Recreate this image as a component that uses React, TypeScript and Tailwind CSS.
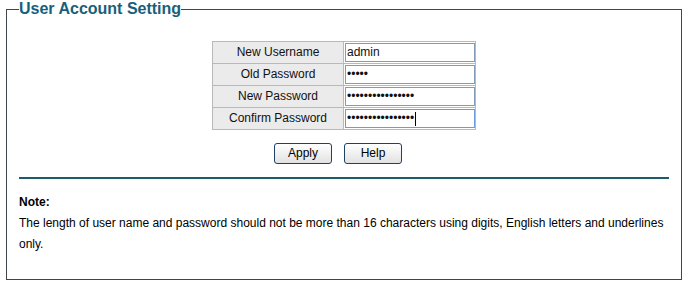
import React from "react";

const rows = [
  { label: "New Username", value: "admin", pw: false, focus: false },
  { label: "Old Password", value: "•••••", pw: true, focus: false },
  { label: "New Password", value: "••••••••••••••••", pw: true, focus: false },
  { label: "Confirm Password", value: "••••••••••••••••", pw: true, focus: true },
];

export default function App() {
  return (
    <div className="w-[693px] h-[289px] bg-white" style={{ fontFamily: '"Liberation Sans", Arial, sans-serif' }}>
      <fieldset className="ml-[6px] w-[676px] border border-[#3f4548] px-[12px] pb-[24px]">
        <legend className="p-0 text-[16px] font-bold leading-[18px] text-[#18607a]">User Account Setting</legend>
        <div className="mt-[23px] flex justify-center">
          <table className="border-collapse border border-[#b9b9b9] text-[12px] text-[#111]">
            <tbody>
              {rows.map((r) => (
                <tr key={r.label} className="h-[22px]">
                  <td className="w-[131px] border border-[#b9b9b9] bg-[#ebebeb] p-0 text-center leading-[21px]">{r.label}</td>
                  <td className="w-[131px] border border-[#b9b9b9] bg-white p-0 pl-[1px] align-top">
                    <div
                      className={
                        "mt-[1px] flex h-[19px] w-[130px] items-center border bg-white pl-[1px] leading-[17px] " +
                        (r.focus ? "border-[#6a9de0]" : "border-[#7f9db9]")
                      }
                    >
                      <span>{r.value}</span>
                      {r.focus && <span className="ml-[1px] inline-block h-[14px] w-[1px] bg-black" />}
                    </div>
                  </td>
                </tr>
              ))}
            </tbody>
          </table>
        </div>
        <div className="mt-[13px] flex justify-center gap-[12px] pr-[12px]">
          <button className="h-[21px] w-[58px] rounded-[3px] border border-[#1f4168] bg-gradient-to-b from-white to-[#e2e2e2] text-[12px] leading-[19px] text-black">
            Apply
          </button>
          <button className="h-[21px] w-[58px] rounded-[3px] border border-[#1f4168] bg-gradient-to-b from-white to-[#e2e2e2] text-[12px] leading-[19px] text-black">
            Help
          </button>
        </div>
        <div className="mt-[13px] h-[2px] w-full bg-[#1b5c68]" />
        <div className="mt-[13px] text-[12px] leading-[21px] text-black">
          <div className="font-bold">Note:</div>
          <div>
            The length of user name and password should not be more than 16 characters using digits, English letters and underlines only.
          </div>
        </div>
      </fieldset>
    </div>
  );
}
